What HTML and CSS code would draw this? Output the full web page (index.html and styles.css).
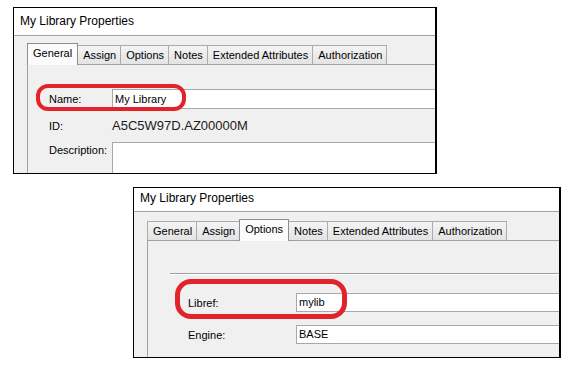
FILE: index.html
```html
<!DOCTYPE html>
<html lang="en">
<head>
    <meta charset="UTF-8">
    <title>My Library Properties</title>
    <link rel="stylesheet" href="styles.css">
</head>
<body>

    <!-- General tab -->
    <div class="dialog dialog-general">
        <div class="titlebar">My Library Properties</div>
        <div class="dialog-body">
            <ul class="tabs">
                <li class="tab active">General</li>
                <li class="tab">Assign</li>
                <li class="tab">Options</li>
                <li class="tab">Notes</li>
                <li class="tab">Extended Attributes</li>
                <li class="tab">Authorization</li>
            </ul>
            <div class="tab-page">
                <div class="field field-name">
                    <label>Name:</label>
                    <div class="input">My Library</div>
                    <span class="highlight"></span>
                </div>
                <div class="field field-id">
                    <label>ID:</label>
                    <span class="id-value">A5C5W97D.AZ00000M</span>
                </div>
                <div class="field field-desc">
                    <label>Description:</label>
                    <div class="input textarea"></div>
                </div>
            </div>
        </div>
    </div>

    <!-- Options tab -->
    <div class="dialog dialog-options">
        <div class="titlebar">My Library Properties</div>
        <div class="dialog-body">
            <ul class="tabs">
                <li class="tab">General</li>
                <li class="tab">Assign</li>
                <li class="tab active">Options</li>
                <li class="tab">Notes</li>
                <li class="tab">Extended Attributes</li>
                <li class="tab">Authorization</li>
            </ul>
            <div class="tab-page">
                <div class="group">
                    <div class="field field-libref">
                        <label>Libref:</label>
                        <div class="input">mylib</div>
                        <span class="highlight"></span>
                    </div>
                    <div class="field field-engine">
                        <label>Engine:</label>
                        <div class="input">BASE</div>
                    </div>
                </div>
            </div>
        </div>
    </div>

</body>
</html>
```

FILE: styles.css
```css
* {
    box-sizing: border-box;
}

body {
    margin: 0;
    background: #fff;
    font-family: "Liberation Sans", Arial, sans-serif;
    font-size: 11px;
    color: #000;
}

.dialog {
    position: relative;
    overflow: hidden;
    background: #f0f0f0;
    border: 1px solid #000;
    border-right-width: 2px;
}

.dialog-general {
    width: 424px;
    height: 167px;
    margin: 7px 0 0 13px;
}

.dialog-options {
    width: 428px;
    height: 171px;
    margin: 13px 0 0 133px;
}

.titlebar {
    background: #fff;
    border-bottom: 1px solid #a0a0a0;
    font-size: 12px;
    padding-left: 6px;
}

.dialog-general .titlebar {
    height: 28px;
    line-height: 27px;
}

.dialog-options .titlebar {
    height: 24px;
    line-height: 20px;
}

.dialog-body {
    padding: 9px 0 0 13px;
}

/* tab strip */
.tabs {
    display: flex;
    align-items: flex-end;
    list-style: none;
    margin: 0;
    padding: 0;
    height: 19px;
    position: relative;
    z-index: 1;
}

.tab {
    height: 19px;
    line-height: 18px;
    padding: 0 4px 0 5px;
    margin-right: -1px;
    border: 1px solid #acacac;
    border-bottom: 0;
    background: linear-gradient(#f4f4f4, #e3e3e3);
    white-space: nowrap;
}

.tab.active {
    position: relative;
    z-index: 2;
    height: 22px;
    line-height: 19px;
    padding: 0 5px;
    margin-bottom: -1px;
    border-color: #8d8d8d;
    background: #fbfbfb;
}

.tab-page {
    height: 200px;
    margin-right: -20px;
    border-top: 1px solid #a0a0a0;
    border-left: 1px solid #a0a0a0;
}

.dialog-general .tab-page {
    padding: 24px 0 0 21px;
}

/* fields */
.field {
    display: flex;
    position: relative;
}

.input {
    flex: 1;
    background: #fff;
    border: 1px solid #a8a8a8;
    padding-left: 2px;
}

.field-name {
    height: 20px;
    align-items: center;
}

.field-name .input {
    height: 20px;
    line-height: 18px;
}

.dialog-general label {
    width: 63px;
}

.field-id {
    height: 33px;
    align-items: center;
}

.id-value {
    font-size: 13px;
    color: #1a1a1a;
}

.field-desc label {
    padding-top: 2px;
}

.textarea {
    height: 40px;
}

/* options page */
.group {
    margin: 32px 0 0 22px;
    padding: 19px 0 0 18px;
    border-top: 1px solid #a0a0a0;
    box-shadow: inset 0 1px #fff;
}

.group label {
    width: 108px;
}

.group .field {
    height: 19px;
    align-items: center;
}

.group .input {
    height: 19px;
    line-height: 17px;
}

.field-engine {
    margin-top: 13px;
}

/* red callout */
.highlight {
    position: absolute;
    border: 4px solid #e2232c;
    border-radius: 12px;
}

.field-name .highlight {
    left: -13px;
    top: -5px;
    width: 150px;
    height: 27px;
}

.field-libref .highlight {
    left: -13px;
    top: -14px;
    width: 172px;
    height: 40px;
    border-width: 5px;
    border-radius: 16px;
}
```
